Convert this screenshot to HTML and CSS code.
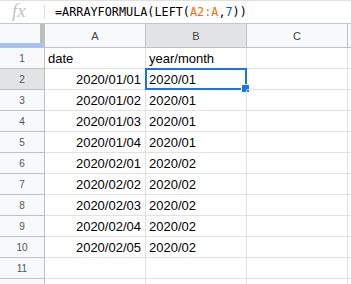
FILE: index.html
```html
<!DOCTYPE html>
<html>
<head>
<meta charset="utf-8">
<link rel="stylesheet" href="styles.css">
</head>
<body>
<div class="fbar">
  <div class="fx">fx</div>
  <div class="sep"></div>
  <div class="formula">=ARRAYFORMULA(LEFT(<span class="rng">A2:A</span>,<span class="num">7</span>))</div>
</div>
<div class="grid">
  <div class="corner"></div>
  <div class="ch">A</div>
  <div class="ch sel">B</div>
  <div class="ch">C</div>
  <div class="ch end"></div>

  <div class="rh">1</div><div class="c">date</div><div class="c">year/month</div><div class="c"></div><div class="c end"></div>
  <div class="rh sel">2</div><div class="c r">2020/01/01</div><div class="c active">2020/01<div class="selbox"><div class="handle"></div></div></div><div class="c"></div><div class="c end"></div>
  <div class="rh">3</div><div class="c r">2020/01/02</div><div class="c">2020/01</div><div class="c"></div><div class="c end"></div>
  <div class="rh">4</div><div class="c r">2020/01/03</div><div class="c">2020/01</div><div class="c"></div><div class="c end"></div>
  <div class="rh">5</div><div class="c r">2020/01/04</div><div class="c">2020/01</div><div class="c"></div><div class="c end"></div>
  <div class="rh">6</div><div class="c r">2020/02/01</div><div class="c">2020/02</div><div class="c"></div><div class="c end"></div>
  <div class="rh">7</div><div class="c r">2020/02/02</div><div class="c">2020/02</div><div class="c"></div><div class="c end"></div>
  <div class="rh">8</div><div class="c r">2020/02/03</div><div class="c">2020/02</div><div class="c"></div><div class="c end"></div>
  <div class="rh">9</div><div class="c r">2020/02/04</div><div class="c">2020/02</div><div class="c"></div><div class="c end"></div>
  <div class="rh">10</div><div class="c r">2020/02/05</div><div class="c">2020/02</div><div class="c"></div><div class="c end"></div>
  <div class="rh">11</div><div class="c"></div><div class="c"></div><div class="c"></div><div class="c end"></div>
  <div class="rh last"></div><div class="c last"></div><div class="c last"></div><div class="c last"></div><div class="c end last"></div>
</div>
</body>
</html>
```
FILE: styles.css
```css
html, body {
  margin: 0;
  padding: 0;
  background: #fff;
  overflow: hidden;
}
body {
  width: 351px;
  height: 284px;
  font-family: "Liberation Sans", Arial, sans-serif;
}
.fbar {
  border-top: 1px solid #e0e0e0;
  border-bottom: 1px solid #c4c7c5;
  box-sizing: border-box;
  height: 24px;
  display: flex;
  align-items: center;
}
.fx {
  width: 44px;
  box-sizing: border-box;
  padding-left: 12px;
  font-family: "Liberation Serif", serif;
  font-style: italic;
  font-size: 19px;
  color: #c4c4c4;
  line-height: 22px;
  margin-top: -2px;
}
.sep {
  width: 1px;
  height: 14px;
  background: #dadce0;
}
.formula {
  margin-left: 10px;
  font-family: "DejaVu Sans Mono", monospace;
  font-size: 11.8px;
  color: #000;
  white-space: nowrap;
}
.rng { color: #e8710a; }
.num { color: #1155cc; }
.grid {
  display: grid;
  grid-template-columns: 45px 101px 101px 101px 1fr;
  grid-template-rows: 24px repeat(11, 21px) 5px;
}
.corner {
  background: #f8f9fa;
  border-right: 1px solid #c0c0c0;
  border-bottom: 1px solid #c0c0c0;
  position: relative;
}
.corner::before {
  content: "";
  position: absolute;
  right: 0;
  top: 0;
  width: 4px;
  height: 19px;
  background: #bdbdbd;
}
.corner::after {
  content: "";
  position: absolute;
  left: 0;
  bottom: 0;
  right: 0;
  height: 4px;
  background: #a1c2fa;
}
.ch {
  background: #f8f9fa;
  border-right: 1px solid #c0c0c0;
  border-bottom: 1px solid #c0c0c0;
  display: flex;
  align-items: center;
  justify-content: center;
  font-size: 11px;
  color: #444;
}
.ch.sel, .rh.sel { background: #e1e3e6; }
.ch.end { border-right: none; }
.rh {
  background: #f8f9fa;
  border-right: 1px solid #c0c0c0;
  border-bottom: 1px solid #c0c0c0;
  display: flex;
  align-items: center;
  justify-content: center;
  font-size: 10px;
  color: #555;
}
.c {
  border-right: 1px solid #e2e2e2;
  border-bottom: 1px solid #e2e2e2;
  font-size: 13px;
  color: #000;
  padding: 0 3px;
  display: flex;
  align-items: center;
  white-space: nowrap;
  position: relative;
}
.c.r { justify-content: flex-end; padding-right: 4px; }
.c.end { border-right: none; }
.last { border-bottom: none; }
.selbox {
  position: absolute;
  left: -1px;
  top: -1px;
  border: 2px solid #1a73e8;
  box-sizing: border-box;
  width: 102px;
  height: 22px;
}
.handle {
  position: absolute;
  right: -5px;
  bottom: -5px;
  width: 7px;
  height: 7px;
  background: #1a73e8;
  border: 1px solid #fff;
}
```
